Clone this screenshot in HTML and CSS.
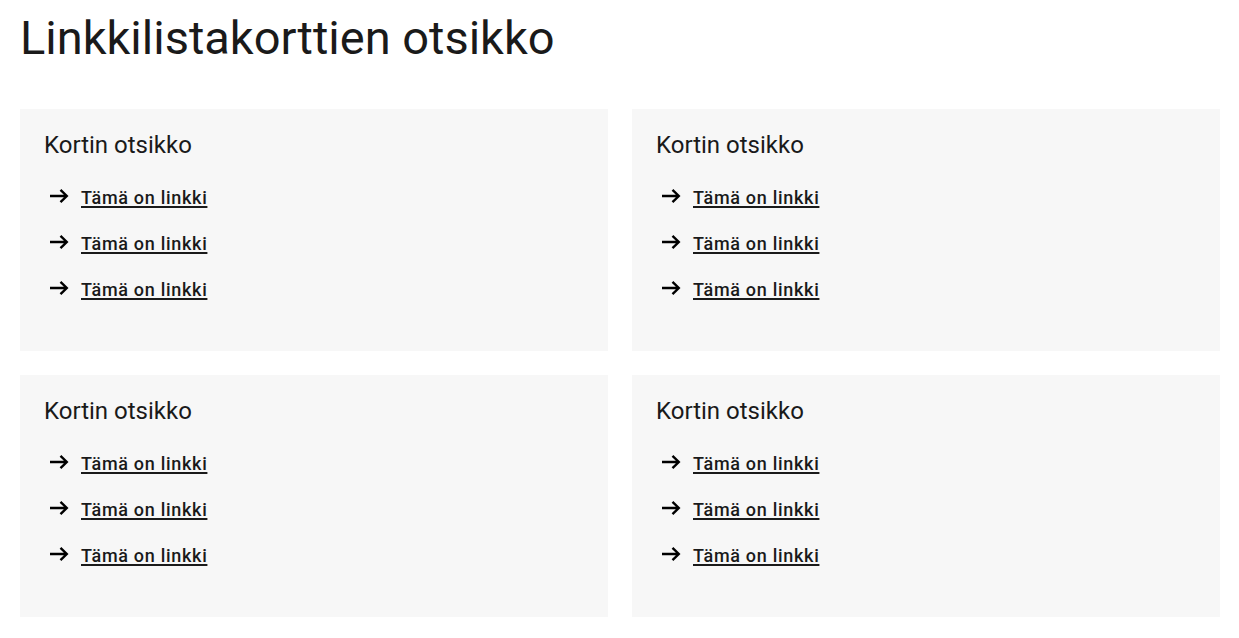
FILE: index.html
```html
<!DOCTYPE html>
<html lang="fi">
<head>
<meta charset="utf-8">
<title>Linkkilistakortit</title>
<link rel="stylesheet" href="styles.css">
</head>
<body>
<main class="page">
  <h1 class="page-title">Linkkilistakorttien otsikko</h1>
  <div class="card-grid">
    <section class="card">
      <h2 class="card-title">Kortin otsikko</h2>
      <ul class="link-list">
        <li class="link-item"><svg class="arrow" viewBox="0 0 20 16" width="20" height="16"><path d="M1 8h17M11.5 1.8L17.8 8l-6.3 6.2" fill="none" stroke="currentColor" stroke-width="2.4"/></svg><a href="#" class="link">Tämä on linkki</a></li>
        <li class="link-item"><svg class="arrow" viewBox="0 0 20 16" width="20" height="16"><path d="M1 8h17M11.5 1.8L17.8 8l-6.3 6.2" fill="none" stroke="currentColor" stroke-width="2.4"/></svg><a href="#" class="link">Tämä on linkki</a></li>
        <li class="link-item"><svg class="arrow" viewBox="0 0 20 16" width="20" height="16"><path d="M1 8h17M11.5 1.8L17.8 8l-6.3 6.2" fill="none" stroke="currentColor" stroke-width="2.4"/></svg><a href="#" class="link">Tämä on linkki</a></li>
      </ul>
    </section>
    <section class="card">
      <h2 class="card-title">Kortin otsikko</h2>
      <ul class="link-list">
        <li class="link-item"><svg class="arrow" viewBox="0 0 20 16" width="20" height="16"><path d="M1 8h17M11.5 1.8L17.8 8l-6.3 6.2" fill="none" stroke="currentColor" stroke-width="2.4"/></svg><a href="#" class="link">Tämä on linkki</a></li>
        <li class="link-item"><svg class="arrow" viewBox="0 0 20 16" width="20" height="16"><path d="M1 8h17M11.5 1.8L17.8 8l-6.3 6.2" fill="none" stroke="currentColor" stroke-width="2.4"/></svg><a href="#" class="link">Tämä on linkki</a></li>
        <li class="link-item"><svg class="arrow" viewBox="0 0 20 16" width="20" height="16"><path d="M1 8h17M11.5 1.8L17.8 8l-6.3 6.2" fill="none" stroke="currentColor" stroke-width="2.4"/></svg><a href="#" class="link">Tämä on linkki</a></li>
      </ul>
    </section>
    <section class="card">
      <h2 class="card-title">Kortin otsikko</h2>
      <ul class="link-list">
        <li class="link-item"><svg class="arrow" viewBox="0 0 20 16" width="20" height="16"><path d="M1 8h17M11.5 1.8L17.8 8l-6.3 6.2" fill="none" stroke="currentColor" stroke-width="2.4"/></svg><a href="#" class="link">Tämä on linkki</a></li>
        <li class="link-item"><svg class="arrow" viewBox="0 0 20 16" width="20" height="16"><path d="M1 8h17M11.5 1.8L17.8 8l-6.3 6.2" fill="none" stroke="currentColor" stroke-width="2.4"/></svg><a href="#" class="link">Tämä on linkki</a></li>
        <li class="link-item"><svg class="arrow" viewBox="0 0 20 16" width="20" height="16"><path d="M1 8h17M11.5 1.8L17.8 8l-6.3 6.2" fill="none" stroke="currentColor" stroke-width="2.4"/></svg><a href="#" class="link">Tämä on linkki</a></li>
      </ul>
    </section>
    <section class="card">
      <h2 class="card-title">Kortin otsikko</h2>
      <ul class="link-list">
        <li class="link-item"><svg class="arrow" viewBox="0 0 20 16" width="20" height="16"><path d="M1 8h17M11.5 1.8L17.8 8l-6.3 6.2" fill="none" stroke="currentColor" stroke-width="2.4"/></svg><a href="#" class="link">Tämä on linkki</a></li>
        <li class="link-item"><svg class="arrow" viewBox="0 0 20 16" width="20" height="16"><path d="M1 8h17M11.5 1.8L17.8 8l-6.3 6.2" fill="none" stroke="currentColor" stroke-width="2.4"/></svg><a href="#" class="link">Tämä on linkki</a></li>
        <li class="link-item"><svg class="arrow" viewBox="0 0 20 16" width="20" height="16"><path d="M1 8h17M11.5 1.8L17.8 8l-6.3 6.2" fill="none" stroke="currentColor" stroke-width="2.4"/></svg><a href="#" class="link">Tämä on linkki</a></li>
      </ul>
    </section>
  </div>
</main>
</body>
</html>
```
FILE: styles.css
```css
* { box-sizing: border-box; }
html, body { margin: 0; padding: 0; background: #fff; }
body {
  font-family: Roboto, "Liberation Sans", sans-serif;
  color: #1a1a1a;
}
.page {
  padding: 0 19px 0 20px;
}
.page-title {
  margin: 0;
  padding-top: 10px;
  font-size: 47px;
  line-height: 56px;
  font-weight: 400;
  height: 109px;
}
.card-grid {
  display: grid;
  grid-template-columns: 1fr 1fr;
  gap: 24px;
}
.card {
  background: #f7f7f7;
  height: 242px;
  padding: 24px 24px;
}
.card-title {
  margin: 0;
  font-size: 24px;
  line-height: 24px;
  font-weight: 400;
}
.link-list {
  list-style: none;
  margin: 28px 0 0;
  padding: 0 0 0 5px;
  display: flex;
  flex-direction: column;
  gap: 22px;
}
.link-item {
  display: flex;
  align-items: center;
  gap: 12px;
  height: 24px;
}
.arrow { flex: none; color: #000; margin-bottom: 2px; }
.link {
  color: #1a1a1a;
  font-size: 18px;
  font-weight: 500;
  letter-spacing: 0.7px;
  text-decoration: underline;
  text-decoration-thickness: 2px;
  text-underline-offset: 2px;
}
```
